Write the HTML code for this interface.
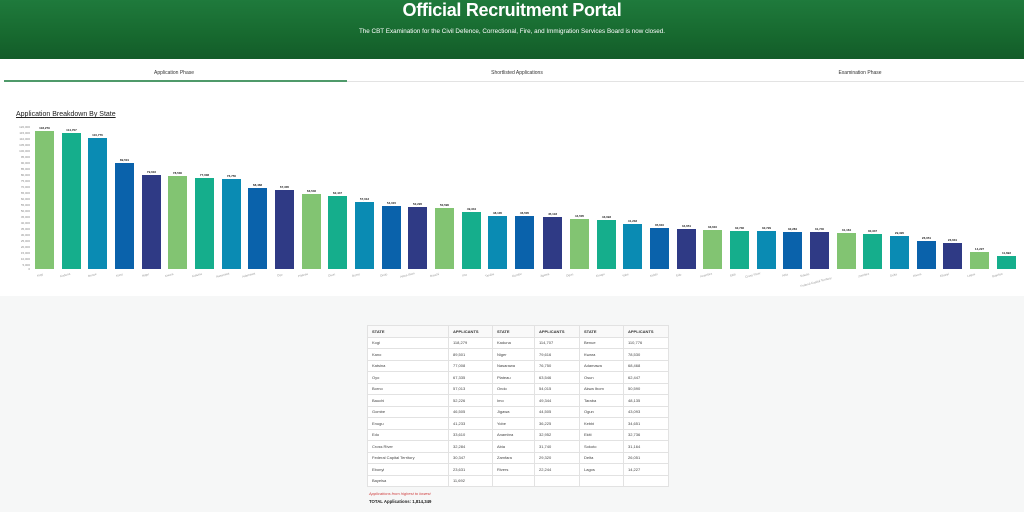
<!DOCTYPE html>
<html><head><meta charset="utf-8"><style>
*{margin:0;padding:0;box-sizing:border-box}
body{width:1024px;height:512px;overflow:hidden;background:#f6f7f7;font-family:"Liberation Sans",sans-serif;position:relative}
.hdr{position:absolute;left:0;top:0;width:1024px;height:59px;background:linear-gradient(180deg,#1f7a3c 0%,#17692f 60%,#135c29 100%)}
.hdr h1{position:absolute;top:0;width:100%;text-align:center;color:#fff;font-size:18px;font-weight:bold;letter-spacing:-0.3px}
.hdr p{position:absolute;top:28px;width:100%;text-align:center;color:#fff;font-size:6.3px}
.main{position:absolute;top:59px;left:0;width:1024px;height:237px;background:#fff}
.tab{position:absolute;top:70px;font-size:5px;color:#333;text-align:center;width:340px}
.tl{position:absolute;top:81px;left:4px;width:1020px;height:1px;background:#e3e3e3}
.ul{position:absolute;top:79.5px;left:4px;width:343px;height:2px;background:#4f9a6a}
.title{position:absolute;left:16px;top:111px;font-size:7px;color:#222;text-decoration:underline}
.b{position:absolute;width:19px;bottom:243px}
.g{background:#82c472}.t{background:#15ae8c}.c{background:#0a8bb3}.u{background:#0a62ab}.n{background:#2f3a85}
.v{position:absolute;font-size:3px;color:#222;width:27px;text-align:center;font-weight:bold}
.y{position:absolute;left:14px;font-size:3px;color:#888;width:16px;text-align:right}
.x{position:absolute;top:273px;font-size:3px;color:#999;transform:rotate(-15deg);white-space:nowrap}
table{position:absolute;left:367px;top:325px;border-collapse:collapse;background:#fff;font-size:4px;color:#444}
td,th{border:1px solid #e2e2e2;height:11.5px;padding:0 4px;text-align:left;font-weight:normal}
th{font-weight:bold;color:#333;background:#f9f9f9}
.red{position:absolute;left:369px;top:491px;font-size:4px;color:#d04040;font-style:italic}
.tot{position:absolute;left:369px;top:499px;font-size:4.3px;color:#222;font-weight:bold}
</style></head><body>
<div class="hdr"><h1>Official Recruitment Portal</h1><p>The CBT Examination for the Civil Defence, Correctional, Fire, and Immigration Services Board is now closed.</p></div>
<div class="main"></div>
<div class="tab" style="left:4px">Application Phase</div>
<div class="tab" style="left:347px">Shortlisted Applications</div>
<div class="tab" style="left:690px">Examination Phase</div>
<div class="tl"></div><div class="ul"></div>
<div class="title">Application Breakdown By State</div>

<div class="y" style="top:125px">120,000</div><div class="y" style="top:131px">115,000</div><div class="y" style="top:137px">110,000</div><div class="y" style="top:143px">105,000</div><div class="y" style="top:149px">100,000</div><div class="y" style="top:155px">95,000</div><div class="y" style="top:161px">90,000</div><div class="y" style="top:167px">85,000</div><div class="y" style="top:173px">80,000</div><div class="y" style="top:179px">75,000</div><div class="y" style="top:185px">70,000</div><div class="y" style="top:191px">65,000</div><div class="y" style="top:197px">60,000</div><div class="y" style="top:203px">55,000</div><div class="y" style="top:209px">50,000</div><div class="y" style="top:215px">45,000</div><div class="y" style="top:221px">40,000</div><div class="y" style="top:227px">35,000</div><div class="y" style="top:233px">30,000</div><div class="y" style="top:239px">25,000</div><div class="y" style="top:245px">20,000</div><div class="y" style="top:251px">15,000</div><div class="y" style="top:257px">10,000</div><div class="y" style="top:263px">5,000</div><div class="y" style="top:267px">0</div>

<div class="b g" style="left:35px;height:138px"></div><div class="v" style="left:31px;top:126px">118,279</div>
<div class="b t" style="left:62px;height:136px"></div><div class="v" style="left:58px;top:128px">114,707</div>
<div class="b c" style="left:88px;height:131px"></div><div class="v" style="left:84px;top:133px">110,776</div>
<div class="b u" style="left:115px;height:106px"></div><div class="v" style="left:111px;top:158px">89,501</div>
<div class="b n" style="left:142px;height:94px"></div><div class="v" style="left:138px;top:170px">79,616</div>
<div class="b g" style="left:168px;height:93px"></div><div class="v" style="left:164px;top:171px">78,530</div>
<div class="b t" style="left:195px;height:91px"></div><div class="v" style="left:191px;top:173px">77,008</div>
<div class="b c" style="left:222px;height:90px"></div><div class="v" style="left:218px;top:174px">76,750</div>
<div class="b u" style="left:248px;height:81px"></div><div class="v" style="left:244px;top:183px">68,468</div>
<div class="b n" style="left:275px;height:79px"></div><div class="v" style="left:271px;top:185px">67,335</div>
<div class="b g" style="left:302px;height:75px"></div><div class="v" style="left:298px;top:189px">63,546</div>
<div class="b t" style="left:328px;height:73px"></div><div class="v" style="left:324px;top:191px">62,447</div>
<div class="b c" style="left:355px;height:67px"></div><div class="v" style="left:351px;top:197px">57,013</div>
<div class="b u" style="left:382px;height:63px"></div><div class="v" style="left:378px;top:201px">54,015</div>
<div class="b n" style="left:408px;height:62px"></div><div class="v" style="left:404px;top:202px">52,226</div>
<div class="b g" style="left:435px;height:61px"></div><div class="v" style="left:431px;top:203px">50,590</div>
<div class="b t" style="left:462px;height:57px"></div><div class="v" style="left:458px;top:207px">49,344</div>
<div class="b c" style="left:488px;height:53px"></div><div class="v" style="left:484px;top:211px">48,135</div>
<div class="b u" style="left:515px;height:53px"></div><div class="v" style="left:511px;top:211px">46,505</div>
<div class="b n" style="left:543px;height:52px"></div><div class="v" style="left:539px;top:212px">45,118</div>
<div class="b g" style="left:570px;height:50px"></div><div class="v" style="left:566px;top:214px">44,505</div>
<div class="b t" style="left:597px;height:49px"></div><div class="v" style="left:593px;top:215px">43,093</div>
<div class="b c" style="left:623px;height:45px"></div><div class="v" style="left:619px;top:219px">41,233</div>
<div class="b u" style="left:650px;height:41px"></div><div class="v" style="left:646px;top:223px">35,610</div>
<div class="b n" style="left:677px;height:40px"></div><div class="v" style="left:673px;top:224px">34,651</div>
<div class="b g" style="left:703px;height:39px"></div><div class="v" style="left:699px;top:225px">33,610</div>
<div class="b t" style="left:730px;height:38px"></div><div class="v" style="left:726px;top:226px">32,736</div>
<div class="b c" style="left:757px;height:38px"></div><div class="v" style="left:753px;top:226px">32,729</div>
<div class="b u" style="left:783px;height:37px"></div><div class="v" style="left:779px;top:227px">32,284</div>
<div class="b n" style="left:810px;height:37px"></div><div class="v" style="left:806px;top:227px">31,740</div>
<div class="b g" style="left:837px;height:36px"></div><div class="v" style="left:833px;top:228px">31,164</div>
<div class="b t" style="left:863px;height:35px"></div><div class="v" style="left:859px;top:229px">30,347</div>
<div class="b c" style="left:890px;height:33px"></div><div class="v" style="left:886px;top:231px">29,320</div>
<div class="b u" style="left:917px;height:28px"></div><div class="v" style="left:913px;top:236px">26,051</div>
<div class="b n" style="left:943px;height:26px"></div><div class="v" style="left:939px;top:238px">23,631</div>
<div class="b g" style="left:970px;height:17px"></div><div class="v" style="left:966px;top:247px">14,227</div>
<div class="b t" style="left:997px;height:13px"></div><div class="v" style="left:993px;top:251px">11,692</div>

<div class="x" style="left:37px">Kogi</div><div class="x" style="left:60px">Kaduna</div><div class="x" style="left:88px">Benue</div><div class="x" style="left:116px">Kano</div><div class="x" style="left:142px">Niger</div><div class="x" style="left:165px">Kwara</div><div class="x" style="left:192px">Katsina</div><div class="x" style="left:216px">Nasarawa</div><div class="x" style="left:242px">Adamawa</div><div class="x" style="left:277px">Oyo</div><div class="x" style="left:298px">Plateau</div><div class="x" style="left:328px">Osun</div><div class="x" style="left:352px">Borno</div><div class="x" style="left:380px">Ondo</div><div class="x" style="left:400px">Akwa Ibom</div><div class="x" style="left:430px">Bauchi</div><div class="x" style="left:462px">Imo</div><div class="x" style="left:485px">Taraba</div><div class="x" style="left:512px">Gombe</div><div class="x" style="left:540px">Jigawa</div><div class="x" style="left:566px">Ogun</div><div class="x" style="left:596px">Enugu</div><div class="x" style="left:622px">Yobe</div><div class="x" style="left:650px">Kebbi</div><div class="x" style="left:676px">Edo</div><div class="x" style="left:700px">Anambra</div><div class="x" style="left:730px">Ekiti</div><div class="x" style="left:745px">Cross River</div><div class="x" style="left:782px">Abia</div><div class="x" style="left:800px">Sokoto</div><div class="x" style="left:800px;top:280px">Federal Capital Territory</div><div class="x" style="left:858px">Zamfara</div><div class="x" style="left:890px">Delta</div><div class="x" style="left:913px">Rivers</div><div class="x" style="left:940px">Ebonyi</div><div class="x" style="left:967px">Lagos</div><div class="x" style="left:992px">Bayelsa</div>

<table>
<colgroup><col style="width:81px"><col style="width:44px"><col style="width:42px"><col style="width:45px"><col style="width:44px"><col style="width:45px"></colgroup>
<tr><th>STATE</th><th>APPLICANTS</th><th>STATE</th><th>APPLICANTS</th><th>STATE</th><th>APPLICANTS</th></tr>
<tr><td>Kogi</td><td>118,279</td><td>Kaduna</td><td>114,707</td><td>Benue</td><td>110,776</td></tr>
<tr><td>Kano</td><td>89,501</td><td>Niger</td><td>79,616</td><td>Kwara</td><td>78,530</td></tr>
<tr><td>Katsina</td><td>77,008</td><td>Nasarawa</td><td>76,750</td><td>Adamawa</td><td>68,468</td></tr>
<tr><td>Oyo</td><td>67,335</td><td>Plateau</td><td>63,546</td><td>Osun</td><td>62,447</td></tr>
<tr><td>Borno</td><td>57,013</td><td>Ondo</td><td>54,015</td><td>Akwa Ibom</td><td>50,590</td></tr>
<tr><td>Bauchi</td><td>52,226</td><td>Imo</td><td>49,344</td><td>Taraba</td><td>48,135</td></tr>
<tr><td>Gombe</td><td>46,505</td><td>Jigawa</td><td>44,505</td><td>Ogun</td><td>43,093</td></tr>
<tr><td>Enugu</td><td>41,233</td><td>Yobe</td><td>36,225</td><td>Kebbi</td><td>34,651</td></tr>
<tr><td>Edo</td><td>33,610</td><td>Anambra</td><td>32,952</td><td>Ekiti</td><td>32,736</td></tr>
<tr><td>Cross River</td><td>32,284</td><td>Abia</td><td>31,740</td><td>Sokoto</td><td>31,164</td></tr>
<tr><td>Federal Capital Territory</td><td>30,347</td><td>Zamfara</td><td>29,320</td><td>Delta</td><td>26,051</td></tr>
<tr><td>Ebonyi</td><td>23,631</td><td>Rivers</td><td>22,244</td><td>Lagos</td><td>14,227</td></tr>
<tr><td>Bayelsa</td><td>11,692</td><td></td><td></td><td></td><td></td></tr>
</table>
<div class="red">Applications from highest to lowest</div>
<div class="tot">TOTAL Applications: 1,814,349</div>
</body></html>
